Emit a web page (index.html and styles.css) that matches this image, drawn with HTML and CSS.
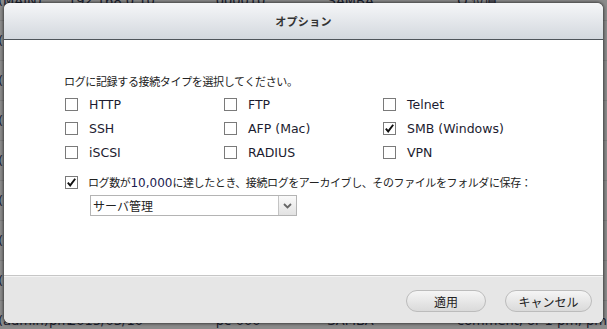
FILE: index.html
```html
<!DOCTYPE html>
<html lang="ja">
<head>
<meta charset="utf-8">
<link rel="stylesheet" href="styles.css">
</head>
<body>
<div class="backdrop">
  <div class="row"><span class="c0">(MAIN)</span><span class="c1">192.168.0.10</span><span class="c2">000010</span><span class="c3">SAMBA</span><span class="c4">Q 位置</span></div>
  <div class="row"><span class="c0">(</span></div>
  <div class="row"><span class="c0">(</span></div>
  <div class="row"><span class="c0">(</span></div>
  <div class="row"><span class="c0">(</span></div>
  <div class="row"><span class="c0">(</span></div>
  <div class="row"><span class="c0">(</span></div>
  <div class="row"><span class="c0">(</span></div>
  <div class="row"><span class="c0">(admin)pm</span><span class="c1">2015/03/10</span><span class="c2">pc-000</span><span class="c3">SAMBA</span><span class="c4">comment, or 1 pm, pm</span></div>
</div>

<div class="dialog">
  <div class="dlg-head">オプション</div>
  <div class="dlg-body">
    <div class="intro">ログに記録する接続タイプを選択してください。</div>
    <div class="types">
      <label class="opt"><span class="cb"></span><span class="lbl">HTTP</span></label>
      <label class="opt"><span class="cb"></span><span class="lbl">FTP</span></label>
      <label class="opt"><span class="cb"></span><span class="lbl">Telnet</span></label>
      <label class="opt"><span class="cb"></span><span class="lbl">SSH</span></label>
      <label class="opt"><span class="cb"></span><span class="lbl">AFP (Mac)</span></label>
      <label class="opt"><span class="cb checked"><svg viewBox="0 0 13 13" width="13" height="13"><path d="M2.8 6.6 L5.2 9.4 L10.2 2.8" fill="none" stroke="#111" stroke-width="1.9"/></svg></span><span class="lbl">SMB (Windows)</span></label>
      <label class="opt"><span class="cb"></span><span class="lbl">iSCSI</span></label>
      <label class="opt"><span class="cb"></span><span class="lbl">RADIUS</span></label>
      <label class="opt"><span class="cb"></span><span class="lbl">VPN</span></label>
    </div>
    <label class="archive"><span class="cb checked"><svg viewBox="0 0 13 13" width="13" height="13"><path d="M2.8 6.6 L5.2 9.4 L10.2 2.8" fill="none" stroke="#111" stroke-width="1.9"/></svg></span><span class="jp">ログ数が<span class="num">10,000</span>に達したとき、接続ログをアーカイブし、そのファイルをフォルダに保存：</span></label>
    <div class="select">
      <span class="sel-text">サーバ管理</span>
      <span class="sel-btn"><svg viewBox="0 0 9 6" width="9" height="6"><path d="M1 1 L4.5 4.5 L8 1" fill="none" stroke="#666" stroke-width="1.8"/></svg></span>
    </div>
  </div>
  <div class="dlg-foot">
    <button class="btn btn-apply">適用</button>
    <button class="btn btn-cancel">キャンセル</button>
  </div>
</div>
</body>
</html>
```
FILE: styles.css
```css
html, body {
  margin: 0;
  padding: 0;
}
body {
  width: 607px;
  height: 329px;
  overflow: hidden;
  background: #8b8b8b;
  position: relative;
  font-family: "DejaVu Sans", "Noto Sans CJK JP", sans-serif;
}
.backdrop {
  margin-top: -19px;
}
.row {
  height: 39px;
  border-bottom: 1px solid #7e7e7e;
  display: flex;
  align-items: center;
  font-size: 13px;
  line-height: 15px;
  color: #1a2030;
  white-space: nowrap;
}
.row span { display: block; }
.c0 { width: 70px; margin-left: -2px; }
.c1 { width: 148px; }
.c2 { width: 112px; }
.c3 { width: 130px; }
.c4 { width: 150px; }

.dialog {
  position: absolute;
  left: 4px;
  top: 3px;
  width: 599px;
  height: 320px;
  border-radius: 6px;
  overflow: hidden;
  background: #fff;
  box-shadow: 0 0 3px 1px rgba(0,0,0,0.55);
  display: flex;
  flex-direction: column;
}
.dlg-head {
  height: 36px;
  flex: none;
  background: linear-gradient(#f5f6f8, #d3d8de);
  border-bottom: 1px solid #4f555b;
  display: flex;
  align-items: center;
  justify-content: center;
  font-family: "Noto Sans CJK JP", sans-serif;
  font-weight: bold;
  font-size: 11px;
  color: #333;
  letter-spacing: 0.3px;
}
.dlg-body {
  flex: 1;
  padding: 34px 0 0 60px;
  background: #fff;
  border-bottom: 1px solid #c6c6c6;
}
.intro {
  font-family: "Noto Sans CJK JP", sans-serif;
  font-size: 11px;
  line-height: 14px;
  color: #222;
  letter-spacing: -0.35px;
}
.types {
  margin-top: 4px;
  display: grid;
  grid-template-columns: 159px 159px 159px;
  grid-auto-rows: 24px;
}
.opt, .archive {
  display: flex;
  align-items: center;
  margin-left: 1px;
}
.cb {
  width: 11px;
  height: 11px;
  border: 1px solid #7a7a7a;
  background: #fff;
  flex: none;
  position: relative;
}
.cb svg {
  position: absolute;
  left: -1px;
  top: -1px;
}
.lbl {
  margin-left: 11px;
  font-size: 12.5px;
  color: #1c1c30;
}
.archive {
  margin-top: 6px;
  height: 24px;
}
.jp {
  margin-left: 10px;
  font-family: "Noto Sans CJK JP", sans-serif;
  font-size: 11px;
  color: #222;
  white-space: nowrap;
  letter-spacing: -0.4px;
}
.num {
  font-family: "DejaVu Sans", sans-serif;
  font-size: 12px;
  color: #1c1c50;
  letter-spacing: 0;
}
.select {
  margin: 1px 0 0 26px;
  width: 205px;
  height: 19px;
  border: 1px solid #b4b4b4;
  background: #fff;
  display: flex;
  align-items: center;
}
.sel-text {
  flex: 1;
  padding-left: 2px;
  font-family: "Noto Sans CJK JP", sans-serif;
  font-size: 12px;
  color: #222;
}
.sel-btn {
  width: 17px;
  height: 19px;
  border-left: 1px solid #c4c4c4;
  background: linear-gradient(#fafafa, #e2e2e2);
  display: flex;
  align-items: center;
  justify-content: center;
}
.dlg-foot {
  height: 47px;
  flex: none;
  background: #e6e6e6;
  border-top: 1px solid #f4f4f4;
  display: flex;
  justify-content: flex-end;
  align-items: flex-start;
  padding: 13px 11px 0 0;
  box-sizing: border-box;
  gap: 19px;
}
.btn {
  height: 22px;
  border: 1px solid #bcbcbc;
  border-radius: 11px;
  background: linear-gradient(#f5f5f5, #dadada);
  font-family: "Noto Sans CJK JP", sans-serif;
  font-size: 12px;
  color: #222;
  padding: 0;
  margin: 0;
}
.btn-apply { width: 80px; }
.btn-cancel { width: 87px; }
```
